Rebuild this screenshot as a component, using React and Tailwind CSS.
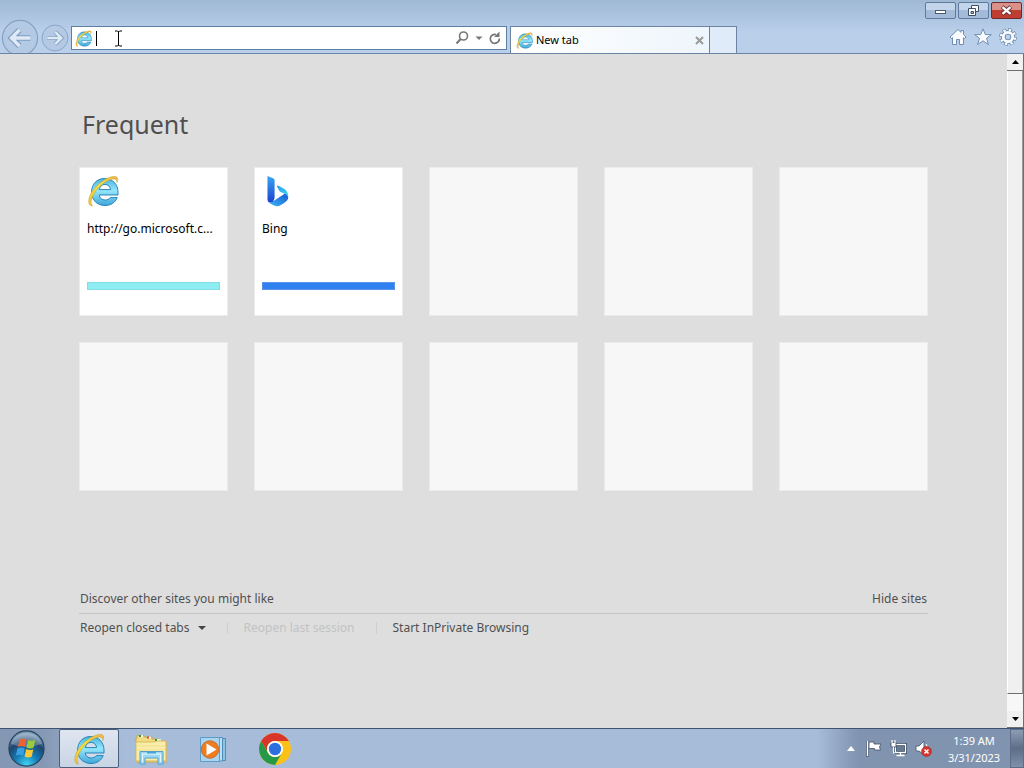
import { useState } from 'react';

const sites = [
  { id: 'msft', title: 'http://go.microsoft.c...', icon: 'ie', bar: 'border-[#82dce6] bg-[#8eedf3]' },
  { id: 'bing', title: 'Bing', icon: 'bing', bar: 'border-[#5a94e8] bg-[#2f80f0]' },
];

const emptyTiles = [1, 2, 3, 4, 5, 6, 7, 8];

function IeIcon({ className, id }) {
  return (
    <svg viewBox="0 0 32 32" className={className} aria-hidden="true">
      <defs>
        <linearGradient id={`${id}-blue`} x1="0" y1="0" x2="0" y2="1">
          <stop offset="0" stopColor="#48b4de" />
          <stop offset="0.45" stopColor="#93e6fb" />
          <stop offset="1" stopColor="#3fa6d8" />
        </linearGradient>
        <linearGradient id={`${id}-gold`} x1="0" y1="1" x2="1" y2="0">
          <stop offset="0" stopColor="#f2c040" />
          <stop offset="0.5" stopColor="#f3e23c" />
          <stop offset="1" stopColor="#f2b04a" />
        </linearGradient>
      </defs>
      <path
        d="M17.5 3.5C25.5 3.5 31 9.2 31 17.3V20H12.2C12.7 23.2 15 25 18.2 25C20.5 25 22.2 24.2 23.3 22.6H30.2C28.3 27.6 23.8 30.5 18 30.5C10 30.5 4.6 25 4.6 17C4.6 9.2 9.8 3.5 17.5 3.5ZM12.3 14.6H23.6C23.2 11.4 21 9.4 18 9.4C15 9.4 12.8 11.4 12.3 14.6Z"
        fill={`url(#${id}-blue)`}
        stroke="#2b83ba"
        strokeWidth="1"
      />
      <path
        d="M5.500 31C0 31.500 0.500 21.500 7 14C13.500 6 23 0.500 28.500 1.500C31 2.200 31.200 4.500 30 7.500C30 4.500 28 3.500 25 4.200C19 5.600 11.500 11.500 7.500 18C4 24 3 28.500 5.500 31Z"
        fill={`url(#${id}-gold)`}
        stroke="#b9a02c"
        strokeWidth="0.5"
      />
    </svg>
  );
}

function BingIcon() {
  return (
    <svg viewBox="0 0 24 32" className="ml-1 h-8 w-6" aria-hidden="true">
      <defs>
        <linearGradient id="bing-stem" x1="0" y1="0" x2="0" y2="1">
          <stop offset="0" stopColor="#37a6f2" />
          <stop offset="1" stopColor="#1d3fd0" />
        </linearGradient>
        <linearGradient id="bing-base" x1="0" y1="1" x2="1" y2="0">
          <stop offset="0" stopColor="#38bdf0" />
          <stop offset="1" stopColor="#1b53d8" />
        </linearGradient>
        <linearGradient id="bing-leaf" x1="0" y1="0" x2="1" y2="1">
          <stop offset="0" stopColor="#2a9bee" />
          <stop offset="1" stopColor="#43d7e8" />
        </linearGradient>
      </defs>
      <path d="M1.500 1L7 3.200Q8.600 3.800 8.600 5V23L7 27Q2 29 1.500 25Z" fill="url(#bing-stem)" />
      <path d="M1.500 24Q2.500 28.500 6 27L19 18.500Q23 20 22 24Q20 27.500 14.500 30.300Q10.500 32.300 6.500 29.800Q1.500 27 1.500 24Z" fill="url(#bing-base)" />
      <path d="M11 11.500Q10.800 10 12.500 10.800L18 13.800Q22.500 16.500 22.300 22Q20.500 18.800 17 18L14.300 16.700Q13.300 16.200 12.800 15Z" fill="url(#bing-leaf)" />
    </svg>
  );
}

function ArrowButton({ label, size, dir }) {
  const arrow = dir === 'left' ? 'M31 20H11M19.500 11.500L11 20L19.500 28.500' : 'M9 20H29M20.500 11.500L29 20L20.500 28.500';

  return (
    <button type="button" aria-label={label} className="shrink-0">
      <svg viewBox="0 0 40 40" className={size} aria-hidden="true">
        <circle cx="20" cy="20" r="18.500" fill="#b3c9e4" stroke="#86a2c4" strokeWidth="1.300" />
        <path d={arrow} fill="none" stroke="#7f9cbf" strokeWidth="6" />
        <path d={arrow} fill="none" stroke="#e0eaf6" strokeWidth="3.600" />
      </svg>
    </button>
  );
}

function WindowControls() {
  return (
    <div className="flex h-[19px] items-start justify-end gap-[2px] pt-[2px] pr-[2px]">
      <button type="button" aria-label="Minimize" className="flex h-[17px] w-[31px] items-center justify-center rounded-xs border border-[#5f7a9d] bg-linear-to-b from-[#c3d5ea] from-50% to-[#a3bbd8] to-50%">
        <svg viewBox="0 0 13 13" className="size-[13px]" aria-hidden="true">
          <rect x="1.500" y="6.500" width="10" height="3" fill="#fff" stroke="#4c5a70" />
        </svg>
      </button>
      <button type="button" aria-label="Restore" className="flex h-[17px] w-[31px] items-center justify-center rounded-xs border border-[#5f7a9d] bg-linear-to-b from-[#c3d5ea] from-50% to-[#a3bbd8] to-50%">
        <svg viewBox="0 0 13 13" className="size-[13px]" aria-hidden="true">
          <path d="M4.500 1.500H11.500V7.500H4.500Z" fill="#fff" stroke="#3f4d66" />
          <path d="M1.500 4.500H8.500V11.500H1.500Z" fill="#fff" stroke="#3f4d66" />
          <path d="M4 7.500H6.500V9.500H4Z" fill="#9db5d2" stroke="#3f4d66" />
        </svg>
      </button>
      <button type="button" aria-label="Close" className="flex h-[17px] w-[31px] items-center justify-center rounded-xs border border-[#6b2a30] bg-linear-to-b from-[#dc9188] from-50% to-[#bf3d31] to-50%">
        <svg viewBox="0 0 12 10" className="h-[11px] w-[13px]" aria-hidden="true">
          <path d="M2 1.500L10 8.500M10 1.500L2 8.500" stroke="#5b3038" strokeWidth="3.800" />
          <path d="M2.300 1.800L9.700 8.200M9.700 1.800L2.300 8.200" stroke="#fff" strokeWidth="2.200" />
        </svg>
      </button>
    </div>
  );
}

function CommandIcons() {
  return (
    <div className="flex w-[78px] shrink-0 justify-end gap-[7px] pt-[9px] pr-[7px]">
      <button type="button" aria-label="Home">
        <svg viewBox="0 0 18 18" className="size-[18px]" aria-hidden="true">
          <path d="M9 1.500L1 9L2.500 10.500L3.500 9.700V16.500H7.500V11.500H10.500V16.500H14.500V9.700L15.500 10.500L17 9L14.500 6.500V2.500H12V4.300Z" fill="#fafcff" stroke="#6f8db2" strokeWidth="1" />
        </svg>
      </button>
      <button type="button" aria-label="Favorites">
        <svg viewBox="0 0 18 18" className="size-[18px]" aria-hidden="true">
          <path d="M9 0.800L11.300 6.600H17.300L12.500 10.300L14.400 16.500L9 12.800L3.600 16.500L5.500 10.300L0.700 6.600H6.700Z" fill="#fafcff" stroke="#6f8db2" strokeWidth="1" />
        </svg>
      </button>
      <button type="button" aria-label="Tools">
        <svg viewBox="0 0 18 18" className="size-[18px]" aria-hidden="true">
          <circle cx="9" cy="9" r="7" fill="none" stroke="#6f8db2" strokeWidth="3.800" strokeDasharray="3.500 1.998" />
          <circle cx="9" cy="9" r="4.700" fill="none" stroke="#6f8db2" strokeWidth="4.600" />
          <circle cx="9" cy="9" r="7" fill="none" stroke="#fafcff" strokeWidth="2.500" strokeDasharray="2.200 3.298" strokeDashoffset="-0.650" />
          <circle cx="9" cy="9" r="4.700" fill="none" stroke="#fafcff" strokeWidth="2.800" />
        </svg>
      </button>
    </div>
  );
}

function AddressBar() {
  const [address, setAddress] = useState('');

  return (
    <div className="relative mt-[7px] flex h-6 min-w-0 flex-1 items-center border border-[#5d7fa3] bg-white pr-1 pl-[3px]">
      <IeIcon id="addr" className="size-[17px] shrink-0" />
      {address === '' && <span className="ml-1 h-[15px] w-px bg-black" />}
      <input
        type="text"
        aria-label="Address"
        value={address}
        onChange={(e) => setAddress(e.target.value)}
        className="min-w-0 flex-1 bg-transparent text-xs outline-none"
      />
      <button type="button" aria-label="Search">
        <svg viewBox="0 0 16 16" className="size-4" aria-hidden="true">
          <circle cx="9.500" cy="6" r="4" fill="none" stroke="#777" strokeWidth="1.600" />
          <path d="M6.700 9L2.500 13.500" stroke="#777" strokeWidth="2" />
        </svg>
      </button>
      <button type="button" aria-label="Show address bar list" className="mx-[5px]">
        <svg viewBox="0 0 8 8" className="size-2" aria-hidden="true">
          <path d="M0.500 2.500H7.500L4 6Z" fill="#777" />
        </svg>
      </button>
      <button type="button" aria-label="Refresh">
        <svg viewBox="0 0 14 14" className="size-[14px]" aria-hidden="true">
          <path d="M11.300 7.500A4.500 4.500 0 1 1 8 3.500" fill="none" stroke="#777" strokeWidth="1.700" />
          <path d="M11.500 0.500V6H6Z" fill="#777" />
        </svg>
      </button>
      {/* mouse pointer over the text field */}
      <svg viewBox="0 0 9 17" className="pointer-events-none absolute top-[3px] left-[42px] h-[17px] w-[9px]" aria-hidden="true">
        <path d="M1 1H3.500L4.500 2L5.500 1H8M4.500 1.500V15.500M1 16H3.500L4.500 15L5.500 16H8" fill="none" stroke="#000" strokeWidth="1" />
      </svg>
    </div>
  );
}

function BrowserChrome() {
  return (
    <header className="shrink-0 border-b border-[#6c84a3] bg-linear-to-b from-[#9fb8d4] to-[#b9cfea] to-60%">
      <WindowControls />
      <div className="flex h-[34px] items-start overflow-hidden">
        <nav className="flex w-[71px] shrink-0 items-start gap-[2px] pl-px">
          <ArrowButton label="Back" size="size-[38px]" dir="left" />
          <div className="pt-[5px]">
            <ArrowButton label="Forward" size="size-[28px]" dir="right" />
          </div>
        </nav>
        <AddressBar />
        <div className="ml-[3px] flex min-w-0 flex-1 items-stretch pt-[7px] pr-[9px]">
          <div className="flex h-[27px] w-[200px] items-center border border-b-0 border-[#6c84a3] bg-linear-to-r from-white to-[#eef5fc] pr-1 pl-[5px]">
            <IeIcon id="tab" className="size-[17px] shrink-0" />
            <span className="ml-[3px] flex-1 truncate text-[11px] text-black">New tab</span>
            <button type="button" aria-label="Close tab">
              <svg viewBox="0 0 11 11" className="size-[11px]" aria-hidden="true">
                <path d="M2 2L9 9M9 2L2 9" stroke="#9a9a9a" strokeWidth="2" />
              </svg>
            </button>
          </div>
          <button type="button" aria-label="New tab" className="h-[27px] w-[27px] border border-b-0 border-l-0 border-[#6c84a3] bg-[#dfebf9]" />
        </div>
        <CommandIcons />
      </div>
    </header>
  );
}

function ScrollBar() {
  return (
    <div className="flex w-[17px] shrink-0 flex-col border-r border-[#6e6e6e] bg-[#f6f6f6]">
      <button type="button" aria-label="Scroll up" className="flex h-[17px] items-center justify-center border-b border-[#6e6e6e] bg-[#f0f0f0]">
        <svg viewBox="0 0 7 4" className="h-1 w-[7px]" aria-hidden="true">
          <path d="M3.500 0L7 4H0Z" fill="#000" />
        </svg>
      </button>
      <div className="flex-1 border-r border-b border-l border-l-white border-r-[#9b9b9b] border-b-[#6e6e6e] bg-[#f0f0f0]" />
      <div className="h-[17px] bg-[#f7f7f7]" />
      <button type="button" aria-label="Scroll down" className="flex h-[17px] items-center justify-center border-b border-[#6e6e6e] bg-[#f0f0f0]">
        <svg viewBox="0 0 7 4" className="h-1 w-[7px]" aria-hidden="true">
          <path d="M0 0H7L3.500 4Z" fill="#000" />
        </svg>
      </button>
    </div>
  );
}

function NewTabPage() {
  return (
    <main className="min-w-0 flex-1 overflow-hidden bg-[#dedede] px-[79px] pt-[51px] text-xs text-[#505050]">
      <h1 className="pl-[3px] text-[25px] leading-[38px]">Frequent</h1>
      <div className="mt-6 grid grid-cols-5 gap-[26px]">
        {sites.map((s) => (
          <a key={s.id} href="#" className="flex aspect-square min-w-0 flex-col border border-[#ececec] bg-white px-[7px] pt-[7px] text-black">
            {s.icon === 'ie' ? <IeIcon id="tile" className="size-8" /> : <BingIcon />}
            <span className="mt-3 truncate leading-5">{s.title}</span>
            <span className={`mt-[43px] h-2 border ${s.bar}`} />
          </a>
        ))}
        {emptyTiles.map((n) => (
          <div key={n} className="aspect-square border border-[#ebebeb] bg-[#f7f7f7]" />
        ))}
      </div>
      <div className="mt-[98px] flex justify-between border-b border-[#c6c6c6] px-px pb-1 leading-5">
        <a href="#">Discover other sites you might like</a>
        <a href="#">Hide sites</a>
      </div>
      <div className="mt-1 flex items-center px-px leading-5">
        <button type="button" className="flex items-center gap-2">
          Reopen closed tabs
          <svg viewBox="0 0 8 4" className="h-1 w-2" aria-hidden="true">
            <path d="M0 0H8L4 4Z" fill="#444" />
          </svg>
        </button>
        <span className="ml-[21px] h-3 w-px bg-[#cfcfcf]" />
        <button type="button" disabled className="ml-4 text-[#c3c3c3]">Reopen last session</button>
        <span className="ml-[21px] h-3 w-px bg-[#cfcfcf]" />
        <a href="#" className="ml-4">Start InPrivate Browsing</a>
      </div>
    </main>
  );
}

function StartOrb() {
  return (
    <svg viewBox="0 0 40 40" className="size-[39px]" aria-hidden="true">
      <defs>
        <radialGradient id="orb" cx="0.5" cy="0.95" r="0.85">
          <stop offset="0" stopColor="#3fd3f2" />
          <stop offset="0.4" stopColor="#1579b4" />
          <stop offset="0.75" stopColor="#1d466e" />
          <stop offset="1" stopColor="#7898b4" />
        </radialGradient>
      </defs>
      <circle cx="20" cy="20" r="18" fill="url(#orb)" stroke="#27435f" strokeWidth="1.200" />
      <path d="M4 15A17 17 0 0 1 36 15Q20 22 4 15Z" fill="#fff" opacity="0.250" />
      <path d="M13 10.800Q16 9 20 10.800L18.500 18.300Q14.500 16.500 11 18.500Z" fill="#ec6234" />
      <path d="M21.500 11.300Q25 13 29 11.300L27.300 19.200Q23.500 21 20 19Z" fill="#9acb3d" />
      <path d="M10.700 20Q14.200 18 18.200 20L16.500 27.500Q12.500 25.500 9 27.500Z" fill="#3ba0e0" />
      <path d="M19.700 20.600Q23 22.500 27 20.700L25.300 28.500Q21.500 30.200 18 28.300Z" fill="#fcc934" />
    </svg>
  );
}

function FolderIcon() {
  return (
    <svg viewBox="0 0 34 32" className="h-8 w-[34px]" aria-hidden="true">
      <path d="M3 5V2.500H10V4H18V6H25V8H32V29H2V5Z" fill="#f2dc83" stroke="#c9ab4c" />
      <path d="M5 3H9M14 4.500H17M22 7H27" stroke="#fff" strokeWidth="1.500" />
      <path d="M5 3H7M21 7H23" stroke="#2f9c3b" strokeWidth="2" />
      <path d="M13 4.500H15" stroke="#d94b2a" strokeWidth="2" />
      <path d="M2 9H20L23 8H32V28H2Z" fill="#f9edaa" stroke="#d7bd63" />
      <path d="M3 13H31M3 17H31" stroke="#f1df8c" />
      <path d="M6 31V18.500H29V31H24V25H11V31Z" fill="#9bd8f3" stroke="#569fca" />
      <path d="M8 21H27M8.500 21V29M26.500 21V29" stroke="#e4f7ff" />
      <path d="M13 19.500H22" stroke="#4aa3d5" strokeWidth="2" />
    </svg>
  );
}

function PlayerIcon() {
  return (
    <svg viewBox="0 0 28 28" className="size-7" aria-hidden="true">
      <path d="M8 3.500H26.500V25.500H8Z" fill="#8fc3e6" stroke="#4f8ebc" />
      <path d="M5 2.500H23.500V26H5Z" fill="#bfe0f4" stroke="#4f8ebc" />
      <path d="M1.500 2.500H20.500V26.500H1.500Z" fill="#a9d4ef" stroke="#5f9cc6" />
      <circle cx="11" cy="14.500" r="8.700" fill="#ee7d22" stroke="#c96c28" />
      <path d="M7.500 8.500L17.500 14.500L7.500 20.500Z" fill="#fff" />
    </svg>
  );
}

function ChromeIcon() {
  return (
    <svg viewBox="0 0 32 32" className="size-8" aria-hidden="true">
      <circle cx="16" cy="16" r="16" fill="#fbc116" />
      <path d="M2.144 8A16 16 0 0 1 29.856 8H16A8 8 0 0 0 9.072 20Z" fill="#d9352a" />
      <path d="M2.144 8A16 16 0 0 0 16 32L22.928 20A8 8 0 0 1 9.072 20Z" fill="#269947" />
      <circle cx="16" cy="16" r="8" fill="#fff" />
      <circle cx="16" cy="16" r="6.200" fill="#2c6fdd" />
    </svg>
  );
}

function Tray() {
  return (
    <div className="flex items-center gap-2">
      <button type="button" aria-label="Show hidden icons" className="mr-[3px]">
        <svg viewBox="0 0 8 5" className="h-[5px] w-2" aria-hidden="true">
          <path d="M4 0L8 5H0Z" fill="#fff" />
        </svg>
      </button>
      <button type="button" aria-label="Action Center">
        <svg viewBox="0 0 16 17" className="h-[17px] w-4" aria-hidden="true">
          <path d="M1.500 1V16.500" stroke="#3f4f66" strokeWidth="3" />
          <path d="M3 2H8V4H15L13.500 7L14.500 10H8.500V8.500H3Z" fill="#fff" stroke="#3f4f66" strokeWidth="0.800" />
          <path d="M1.500 1V16" stroke="#fff" strokeWidth="1.500" />
        </svg>
      </button>
      <button type="button" aria-label="Network">
        <svg viewBox="0 0 17 17" className="size-[17px]" aria-hidden="true">
          <path d="M5.500 4.500H15.500V12.500H5.500Z" fill="#667a94" stroke="#35445b" strokeWidth="2.800" />
          <path d="M5.500 4.500H15.500V12.500H5.500Z M10.500 12.500V15M6.500 15.500H14.500" fill="none" stroke="#fff" strokeWidth="1.300" />
          <path d="M1 2.500H6V7H1Z" fill="#fff" stroke="#35445b" strokeWidth="0.800" />
          <path d="M2 0V3M5 0V3M3.500 7V13H5" fill="none" stroke="#fff" strokeWidth="1.200" />
        </svg>
      </button>
      <button type="button" aria-label="Volume muted">
        <svg viewBox="0 0 17 17" className="size-[17px]" aria-hidden="true">
          <path d="M1 6H4L9 1V15L4 11H1Z" fill="#fff" stroke="#44546b" strokeWidth="0.800" />
          <path d="M11 4Q12.500 6 12 8" fill="none" stroke="#fff" />
          <circle cx="11.500" cy="11.500" r="5" fill="#d4342c" stroke="#a52520" strokeWidth="0.500" />
          <path d="M9.500 9.500L13.500 13.500M13.500 9.500L9.500 13.500" stroke="#fff" strokeWidth="1.600" />
        </svg>
      </button>
      <button type="button" className="ml-1 w-[60px] text-center text-[11px] leading-[17px] text-white">
        <span className="block">1:39 AM</span>
        <span className="block">3/31/2023</span>
      </button>
    </div>
  );
}

function Taskbar() {
  return (
    <footer className="flex h-10 shrink-0 items-stretch border-t border-[#3e5472] bg-linear-to-r from-[#8598b3] from-4% via-[#a7bcd9] via-12% to-[#a7bcd9]">
      <button type="button" aria-label="Start" className="flex w-[59px] shrink-0 items-center pl-[7px]">
        <StartOrb />
      </button>
      <div className="flex flex-1 gap-[2px]">
        <button type="button" aria-label="Internet Explorer" className="flex w-[60px] items-center justify-center rounded-xs border border-[#4b5f7c] bg-linear-to-b from-[#dfe6f0] to-[#c9d4e4]">
          <IeIcon id="task" className="size-8" />
        </button>
        <button type="button" aria-label="Windows Explorer" className="flex w-[60px] items-center justify-center">
          <FolderIcon />
        </button>
        <button type="button" aria-label="Media Player" className="flex w-[60px] items-center justify-center">
          <PlayerIcon />
        </button>
        <button type="button" aria-label="Chrome" className="flex w-[60px] items-center justify-center">
          <ChromeIcon />
        </button>
      </div>
      <div className="flex bg-linear-to-r from-[#a7bcd9] to-[#8094b0] to-20% pl-[30px]">
        <Tray />
        <button type="button" aria-label="Show desktop" className="ml-[6px] w-[14px] border border-[#5b6d87] bg-linear-to-b from-[#8c9db4] via-[#5d6f87] to-[#7d91ab]" />
      </div>
    </footer>
  );
}

export default function App() {
  return (
    <div className="flex h-screen flex-col overflow-hidden font-['Noto_Sans','Open_Sans',sans-serif]">
      <BrowserChrome />
      <div className="flex min-h-0 flex-1">
        <NewTabPage />
        <ScrollBar />
      </div>
      <Taskbar />
    </div>
  );
}
